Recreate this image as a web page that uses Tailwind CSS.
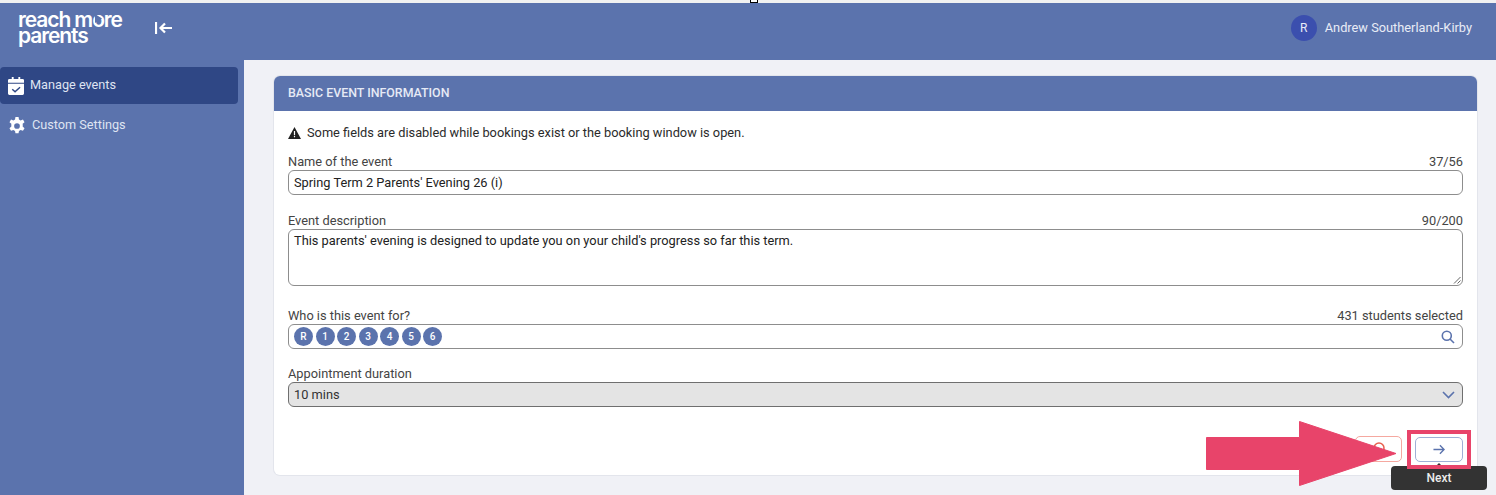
<!DOCTYPE html>
<html lang="en">
<head>
    <meta charset="UTF-8">
    <title>Manage events</title>
    <script src="https://cdn.jsdelivr.net/npm/@tailwindcss/browser@4"></script>
</head>
<body class="font-['Roboto',sans-serif]">
    <div class="relative w-[1496px] h-[495px] overflow-hidden bg-[#f0f1f6] flex flex-col text-[#2b2b2b]">
        <!-- top strip -->
        <div class="h-[3px] bg-[#f1f1f1] shrink-0"></div>
        <!-- header -->
        <div class="h-[57px] shrink-0 bg-[#5b73ad] flex items-center justify-between pl-[18px] pr-[24px] pb-[7px]">
            <div class="flex items-center">
                <div class="relative w-[137px] font-['Inter',sans-serif] font-semibold text-white text-[21px] leading-[16px] tracking-[-1.100px]">
                    reach more<br>parents
                    <!-- the logo's o has a play arrow for a counter -->
                    <svg class="absolute left-[77px] top-[2px] w-[7px] h-[9px] text-[#5b73ad]" viewBox="0 0 7 9" fill="currentColor">
                        <path d="M0 0 7 4.500 0 9z"/>
                    </svg>
                </div>
                <svg class="w-[18px] h-[16px] -mt-[1px] text-white" viewBox="0 0 18 16" fill="none" stroke="currentColor" stroke-width="2.200">
                    <path d="M1 2v12"/>
                    <path d="M17 8H5.500M10 3.500 5.500 8l4.500 4.500"/>
                </svg>
            </div>
            <div class="flex items-center gap-[8px]">
                <div class="w-[26px] h-[26px] rounded-full bg-[#3b4fae] text-[#e8ebf8] text-[12px] flex items-center justify-center">R</div>
                <div class="text-[12.800px] text-[#e9ecf6]">Andrew Southerland-Kirby</div>
            </div>
        </div>
        <div class="flex flex-1 min-h-0">
            <!-- sidebar -->
            <div class="w-[244px] shrink-0 bg-[#5b73ad] pt-[7px] pr-[6px]">
                <div class="h-[37px] bg-[#2f4785] rounded-[4px] flex items-center pl-[8px] gap-[5px] text-[#dfe4f2] text-[12.700px]">
                    <svg class="w-[16px] h-[18px] text-white" viewBox="0 0 17 19" fill="currentColor">
                        <path d="M4 0h2v2h5V0h2v2h2.500A1.500 1.500 0 0 1 17 3.500V6H0V3.500A1.500 1.500 0 0 1 1.500 2H4z"/>
                        <path fill-rule="evenodd" d="M0 7h17v10.500a1.500 1.500 0 0 1-1.500 1.500h-14A1.500 1.500 0 0 1 0 17.500zm12.300 3.300L7.500 14.600 5 12.400l-1 1.100 3.500 3.100 5.800-5.200z"/>
                    </svg>
                    <span class="pb-[2px] pl-[1px]">Manage events</span>
                </div>
                <div class="h-[37px] mt-[3px] flex items-center pl-[8px] gap-[6px] text-[#dfe4f2] text-[12.700px]">
                    <svg class="w-[18px] h-[18px] text-white" viewBox="2 1 20 22" fill="currentColor">
                        <path fill-rule="evenodd" d="M13.900 1h-3.800l-.5 3a8 8 0 0 0-2 1.200L4.700 4.100 2.800 7.400l2.300 1.900a8 8 0 0 0 0 2.400v1l-2.300 1.900 1.900 3.300 2.900-1.100a8 8 0 0 0 2 1.200l.5 3h3.800l.5-3a8 8 0 0 0 2-1.200l2.900 1.100 1.900-3.300-2.300-1.900a8 8 0 0 0 0-3.400l2.300-1.900-1.900-3.300-2.900 1.100a8 8 0 0 0-2-1.200zM12 8.500a3.500 3.500 0 1 1 0 7 3.500 3.500 0 0 1 0-7z"/>
                    </svg>
                    <span class="pb-[2px]">Custom Settings</span>
                </div>
            </div>
            <!-- main -->
            <div class="flex-1 pt-[16px] pl-[30px] pr-[19px]">
                <div class="h-[399px] bg-white rounded-[6px] shadow-[0_0_0_1px_#e3e5ec] overflow-hidden">
                    <div class="h-[35px] bg-[#5b73ad] flex items-center pl-[14px] text-[12.400px] font-medium text-[#e6eaf5]">BASIC EVENT INFORMATION</div>
                    <div class="px-[14px] text-[12.800px]">
                        <div class="h-[21px] mt-[11px] flex items-center gap-[6px]">
                            <svg class="w-[13px] h-[12px] text-[#222]" viewBox="0 0 13 12" fill="currentColor">
                                <path fill-rule="evenodd" d="M6.500 0 13 12H0zM5.900 4v4.200h1.200V4zm0 5v1.300h1.200V9z"/>
                            </svg>
                            <span>Some fields are disabled while bookings exist or the booking window is open.</span>
                        </div>
                        <!-- name -->
                        <div class="mt-[10px] flex justify-between h-[17px] items-center text-[#444]"><span>Name of the event</span><span>37/56</span></div>
                        <div class="h-[25px] border border-[#8d8d8d] rounded-[6px] flex items-center px-[5px] text-[#222]">Spring Term 2 Parents' Evening 26 (i)</div>
                        <!-- description -->
                        <div class="mt-[17px] flex justify-between h-[17px] items-center text-[#444]"><span>Event description</span><span>90/200</span></div>
                        <div class="relative h-[57px] border border-[#8d8d8d] rounded-[6px] px-[5px] pt-[1px] text-[#222]">
                            This parents' evening is designed to update you on your child's progress so far this term.
                            <svg class="absolute right-[1px] bottom-[1px] w-[8px] h-[8px] text-[#666]" viewBox="0 0 8 8" fill="none" stroke="currentColor">
                                <path d="M1 7.500 7.500 1M4.500 7.500l3-3"/>
                            </svg>
                        </div>
                        <!-- who -->
                        <div class="mt-[21px] flex justify-between h-[17px] items-center text-[#444]"><span>Who is this event for?</span><span>431 students selected</span></div>
                        <div class="h-[25px] border border-[#8d8d8d] rounded-[6px] flex items-center justify-between pl-[5px] pr-[7px]">
                            <div class="flex gap-[2.500px] -mt-[1px]">
                                <div class="w-[19px] h-[19px] rounded-full bg-[#5b73ad] text-white text-[10px] font-medium flex items-center justify-center">R</div>
                                <div class="w-[19px] h-[19px] rounded-full bg-[#5b73ad] text-white text-[10px] font-medium flex items-center justify-center">1</div>
                                <div class="w-[19px] h-[19px] rounded-full bg-[#5b73ad] text-white text-[10px] font-medium flex items-center justify-center">2</div>
                                <div class="w-[19px] h-[19px] rounded-full bg-[#5b73ad] text-white text-[10px] font-medium flex items-center justify-center">3</div>
                                <div class="w-[19px] h-[19px] rounded-full bg-[#5b73ad] text-white text-[10px] font-medium flex items-center justify-center">4</div>
                                <div class="w-[19px] h-[19px] rounded-full bg-[#5b73ad] text-white text-[10px] font-medium flex items-center justify-center">5</div>
                                <div class="w-[19px] h-[19px] rounded-full bg-[#5b73ad] text-white text-[10px] font-medium flex items-center justify-center">6</div>
                            </div>
                            <svg class="w-[14px] h-[14px] text-[#5b73ad]" viewBox="0 0 14 14" fill="none" stroke="currentColor" stroke-width="1.600">
                                <circle cx="5.800" cy="5.800" r="4.500"/>
                                <path d="m9 9 4 4"/>
                            </svg>
                        </div>
                        <!-- duration -->
                        <div class="mt-[16px] flex justify-between h-[17px] items-center text-[#444]"><span>Appointment duration</span></div>
                        <div class="h-[25px] bg-[#e4e4e4] border border-[#6f6f6f] rounded-[6px] flex items-center justify-between pl-[5px] pr-[7px] text-[#333]">
                            <span>10 mins</span>
                            <svg class="w-[13px] h-[8px] text-[#5b73ad]" viewBox="0 0 13 8" fill="none" stroke="currentColor" stroke-width="1.600">
                                <path d="m1 1 5.500 5.500L12 1"/>
                            </svg>
                        </div>
                    </div>
                </div>
            </div>
        </div>

        <!-- screenshot annotation and tooltip, over the page -->
        <div class="absolute left-[750px] top-0 w-[8px] h-[3px] bg-white border border-black border-t-0"></div>
        <div class="absolute left-[1355px] top-[436px] w-[47px] h-[26px] rounded-[5px] bg-white border border-[#f5a8a0]"></div>
        <svg class="absolute left-[1372px] top-[441px] w-[14px] h-[10px]" viewBox="0 0 14 10" fill="none" stroke="#e8604f" stroke-width="1.500">
            <circle cx="7" cy="7" r="5"/>
        </svg>
        <div class="absolute left-[1415px] top-[437px] w-[48px] h-[25px] rounded-[5px] bg-white border border-[#9fb0d6] flex items-center justify-center">
            <svg class="w-[12px] h-[11px] text-[#5b73ad]" viewBox="0 0 13 11" fill="none" stroke="currentColor" stroke-width="1.500">
                <path d="M0.500 5.500H12M7.500 1 12 5.500 7.500 10"/>
            </svg>
        </div>
        <svg class="absolute left-[1206px] top-[420px] w-[195px] h-[67px]" viewBox="0 0 195 67" fill="#e8446a" stroke="#e8446a" stroke-linejoin="round">
            <path d="M0.500 17.500H93.500V1.500L190 33.500 93.500 65.500V49.500H0.500z"/>
        </svg>
        <div class="absolute left-[1391px] top-[466px] w-[96px] h-[24px] rounded-[4px] bg-[#333] text-[#ececec] text-[12px] font-medium flex items-center justify-center">Next</div>
        <div class="absolute left-[1436px] top-[463px] w-0 h-0 border-x-[3px] border-x-transparent border-b-[3px] border-b-[#333]"></div>
        <div class="absolute left-[1407px] top-[430px] w-[64px] h-[39px] border-[4px] border-[#e8446a]"></div>
    </div>
</body>
</html>
